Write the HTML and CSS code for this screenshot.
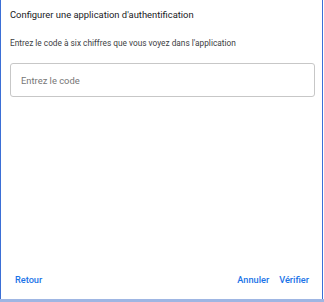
FILE: index.html
```html
<!DOCTYPE html>
<html lang="fr">

<head>
  <meta charset="UTF-8">
  <title>Configurer une application d'authentification</title>
  <link rel="stylesheet" href="styles.css">
</head>

<body>
  <div class="dialog">
    <!-- Header -->
    <h2 class="dialog-title">Configurer une application d'authentification</h2>

    <!-- Body -->
    <div class="dialog-body">
      <p class="hint">Entrez le code à six chiffres que vous voyez dans l'application</p>
      <input class="code-input" type="text" placeholder="Entrez le code">
    </div>

    <!-- Actions -->
    <div class="dialog-actions">
      <button class="text-btn">Retour</button>
      <div class="actions-right">
        <button class="text-btn">Annuler</button>
        <button class="text-btn">Vérifier</button>
      </div>
    </div>
  </div>
  <div class="bottom-bar"></div>
</body>

</html>
```

FILE: styles.css
```css
/* General Styles */
body {
  margin: 0;
  padding: 0;
  font-family: Roboto, 'Liberation Sans', sans-serif;
  background: #fff;
  width: 324px;
  height: 302px;
  overflow: hidden;
}

/* Dialog */
.dialog {
  box-sizing: border-box;
  width: 323px;
  height: 299px;
  border-left: 1px solid #3b6fd6;
  border-right: 1px solid #3b6fd6;
  padding: 0 9px;
  display: flex;
  flex-direction: column;
}

.dialog-title {
  margin: 7px 0 0;
  font-size: 9.4px;
  font-weight: 400;
  line-height: 16px;
  color: #202124;
}

.dialog-body {
  flex: 1;
}

.hint {
  margin: 14px 0 0;
  font-size: 8.3px;
  line-height: 12px;
  color: #3c4043;
}

.code-input {
  box-sizing: border-box;
  display: block;
  width: 305px;
  height: 34px;
  margin-top: 14px;
  padding: 0 10px;
  border: 1px solid #c7c7c7;
  border-radius: 3px;
  font-family: inherit;
  font-size: 9.4px;
  color: #202124;
  outline: none;
}

.code-input::placeholder {
  color: #767676;
}

/* Actions */
.dialog-actions {
  display: flex;
  justify-content: space-between;
  align-items: center;
  padding: 0 4px 13px 5px;
}

.actions-right {
  display: flex;
  gap: 10px;
}

.text-btn {
  padding: 0;
  border: none;
  background: none;
  font-family: inherit;
  font-size: 9.2px;
  font-weight: 500;
  line-height: 12px;
  color: #1a73e8;
  cursor: pointer;
}

.bottom-bar {
  height: 3px;
  background: #9fb6e3;
}
```
